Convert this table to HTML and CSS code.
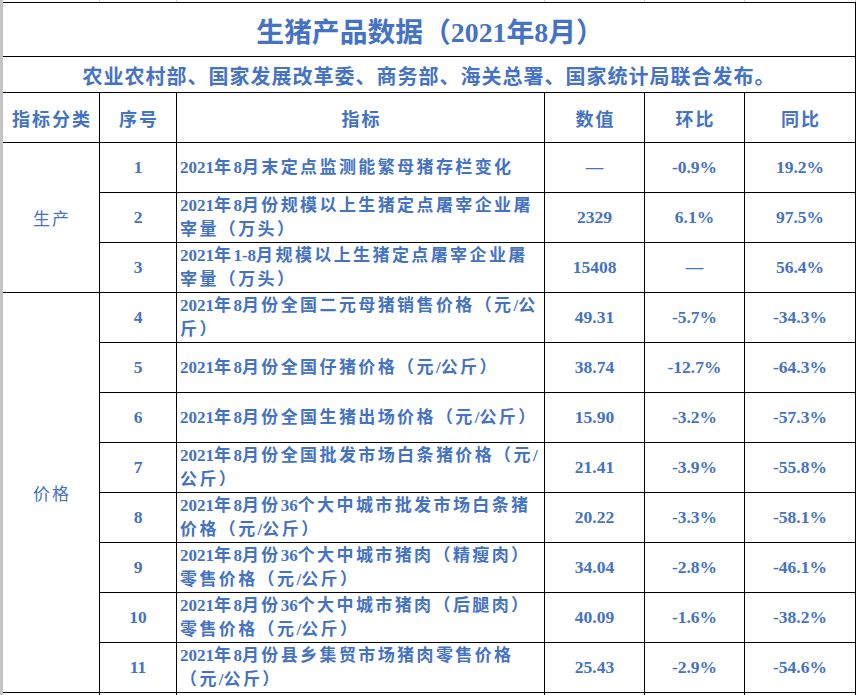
FILE: index.html
```html
<!DOCTYPE html>
<html lang="zh-CN">
<head>
<meta charset="utf-8">
<title>生猪产品数据（2021年8月）</title>
<link rel="stylesheet" href="styles.css">
</head>
<body>
<div class="sheet">
  <div class="ticks"><span></span><span></span><span></span><span></span><span></span><span></span></div>
  <div class="table">
    <div class="cell title">生猪产品数据（2021年8月）</div>
    <div class="cell subtitle">农业农村部、国家发展改革委、商务部、海关总署、国家统计局联合发布。</div>

    <div class="cell head">指标分类</div>
    <div class="cell head">序号</div>
    <div class="cell head">指标</div>
    <div class="cell head">数值</div>
    <div class="cell head">环比</div>
    <div class="cell head">同比</div>

    <div class="cell cat span3">生产</div>
    <div class="cell no">1</div>
    <div class="cell ind"><p><span class="n">2021</span>年<span class="n">8</span>月末定点监测能繁母猪存栏变化</p></div>
    <div class="cell val">—</div>
    <div class="cell val">-0.9%</div>
    <div class="cell val">19.2%</div>

    <div class="cell no">2</div>
    <div class="cell ind"><p><span class="n">2021</span>年<span class="n">8</span>月份规模以上生猪定点屠宰企业屠<br>宰量（万头）</p></div>
    <div class="cell val">2329</div>
    <div class="cell val">6.1%</div>
    <div class="cell val">97.5%</div>

    <div class="cell no">3</div>
    <div class="cell ind"><p><span class="n">2021</span>年<span class="n">1-8</span>月规模以上生猪定点屠宰企业屠<br>宰量（万头）</p></div>
    <div class="cell val">15408</div>
    <div class="cell val">—</div>
    <div class="cell val">56.4%</div>

    <div class="cell cat span8">价格</div>
    <div class="cell no">4</div>
    <div class="cell ind"><p><span class="n">2021</span>年<span class="n">8</span>月份全国二元母猪销售价格（元<span class="n">/</span>公<br>斤）</p></div>
    <div class="cell val">49.31</div>
    <div class="cell val">-5.7%</div>
    <div class="cell val">-34.3%</div>

    <div class="cell no">5</div>
    <div class="cell ind"><p><span class="n">2021</span>年<span class="n">8</span>月份全国仔猪价格（元<span class="n">/</span>公斤）</p></div>
    <div class="cell val">38.74</div>
    <div class="cell val">-12.7%</div>
    <div class="cell val">-64.3%</div>

    <div class="cell no">6</div>
    <div class="cell ind"><p><span class="n">2021</span>年<span class="n">8</span>月份全国生猪出场价格（元<span class="n">/</span>公斤）</p></div>
    <div class="cell val">15.90</div>
    <div class="cell val">-3.2%</div>
    <div class="cell val">-57.3%</div>

    <div class="cell no">7</div>
    <div class="cell ind"><p><span class="n">2021</span>年<span class="n">8</span>月份全国批发市场白条猪价格（元<span class="n">/</span><br>公斤）</p></div>
    <div class="cell val">21.41</div>
    <div class="cell val">-3.9%</div>
    <div class="cell val">-55.8%</div>

    <div class="cell no">8</div>
    <div class="cell ind"><p><span class="n">2021</span>年<span class="n">8</span>月份<span class="n">36</span>个大中城市批发市场白条猪<br>价格（元<span class="n">/</span>公斤）</p></div>
    <div class="cell val">20.22</div>
    <div class="cell val">-3.3%</div>
    <div class="cell val">-58.1%</div>

    <div class="cell no">9</div>
    <div class="cell ind"><p><span class="n">2021</span>年<span class="n">8</span>月份<span class="n">36</span>个大中城市猪肉（精瘦肉）<br>零售价格（元<span class="n">/</span>公斤）</p></div>
    <div class="cell val">34.04</div>
    <div class="cell val">-2.8%</div>
    <div class="cell val">-46.1%</div>

    <div class="cell no">10</div>
    <div class="cell ind"><p><span class="n">2021</span>年<span class="n">8</span>月份<span class="n">36</span>个大中城市猪肉（后腿肉）<br>零售价格（元<span class="n">/</span>公斤）</p></div>
    <div class="cell val">40.09</div>
    <div class="cell val">-1.6%</div>
    <div class="cell val">-38.2%</div>

    <div class="cell no">11</div>
    <div class="cell ind"><p><span class="n">2021</span>年<span class="n">8</span>月份县乡集贸市场猪肉零售价格<br>（元<span class="n">/</span>公斤）</p></div>
    <div class="cell val">25.43</div>
    <div class="cell val">-2.9%</div>
    <div class="cell val">-54.6%</div>

    <div class="cell"></div>
    <div class="cell"></div>
    <div class="cell"></div>
    <div class="cell"></div>
    <div class="cell"></div>
    <div class="cell"></div>
  </div>
</div>
</body>
</html>
```

FILE: styles.css
```css
html, body {
  margin: 0;
  padding: 0;
  background: #fff;
  overflow: hidden;
}

.sheet {
  border-left: 3px solid #c4c4c4;
  height: 695px;
  box-sizing: border-box;
}

.ticks {
  display: grid;
  grid-template-columns: 96px 76px 367px 99px 99px 110px;
  column-gap: 1px;
  padding-right: 1px;
  height: 2px;
  width: max-content;
  background: #d4d4d4;
}

.ticks span {
  background: #fff;
}

.table {
  display: grid;
  grid-template-columns: 96px 76px 367px 99px 99px 110px;
  grid-template-rows: 53px 35px 49px repeat(11, 49px) 2px;
  gap: 1px;
  padding: 1px 1px 0 0;
  width: max-content;
  background: #000;
  color: #4472c4;
}

.cell {
  background: #fff;
  display: flex;
  align-items: center;
  justify-content: center;
  overflow: hidden;
  white-space: nowrap;
}

.title {
  grid-column: 1 / -1;
  font-family: "Liberation Serif", "Noto Sans CJK SC", serif;
  font-weight: 700;
  font-size: 27.8px;
  padding-left: 2px;
}

.subtitle {
  grid-column: 1 / -1;
  font-family: "Noto Sans CJK SC", sans-serif;
  font-weight: 700;
  font-size: 20px;
  letter-spacing: 1px;
  padding-top: 2px;
}

.head {
  font-family: "Noto Sans CJK SC", sans-serif;
  font-weight: 700;
  font-size: 18px;
  letter-spacing: 2px;
  padding-left: 2px;
}

.cat {
  font-family: "Noto Sans CJK SC", sans-serif;
  font-weight: 400;
  font-size: 17px;
  letter-spacing: 2px;
  padding-left: 2px;
}

.span3 {
  grid-row: span 3;
}

.span8 {
  grid-row: span 8;
}

.no,
.val {
  font-family: "Liberation Serif", serif;
  font-weight: 700;
  font-size: 17.5px;
}

.ind {
  justify-content: flex-start;
  padding: 1px 3px 0;
  font-family: "Liberation Serif", "Noto Sans CJK SC", serif;
  font-weight: 700;
  font-size: 17px;
  letter-spacing: 2.4px;
}

.ind p {
  margin: 0;
  line-height: 24px;
}

.ind .n {
  letter-spacing: 0;
}
```
